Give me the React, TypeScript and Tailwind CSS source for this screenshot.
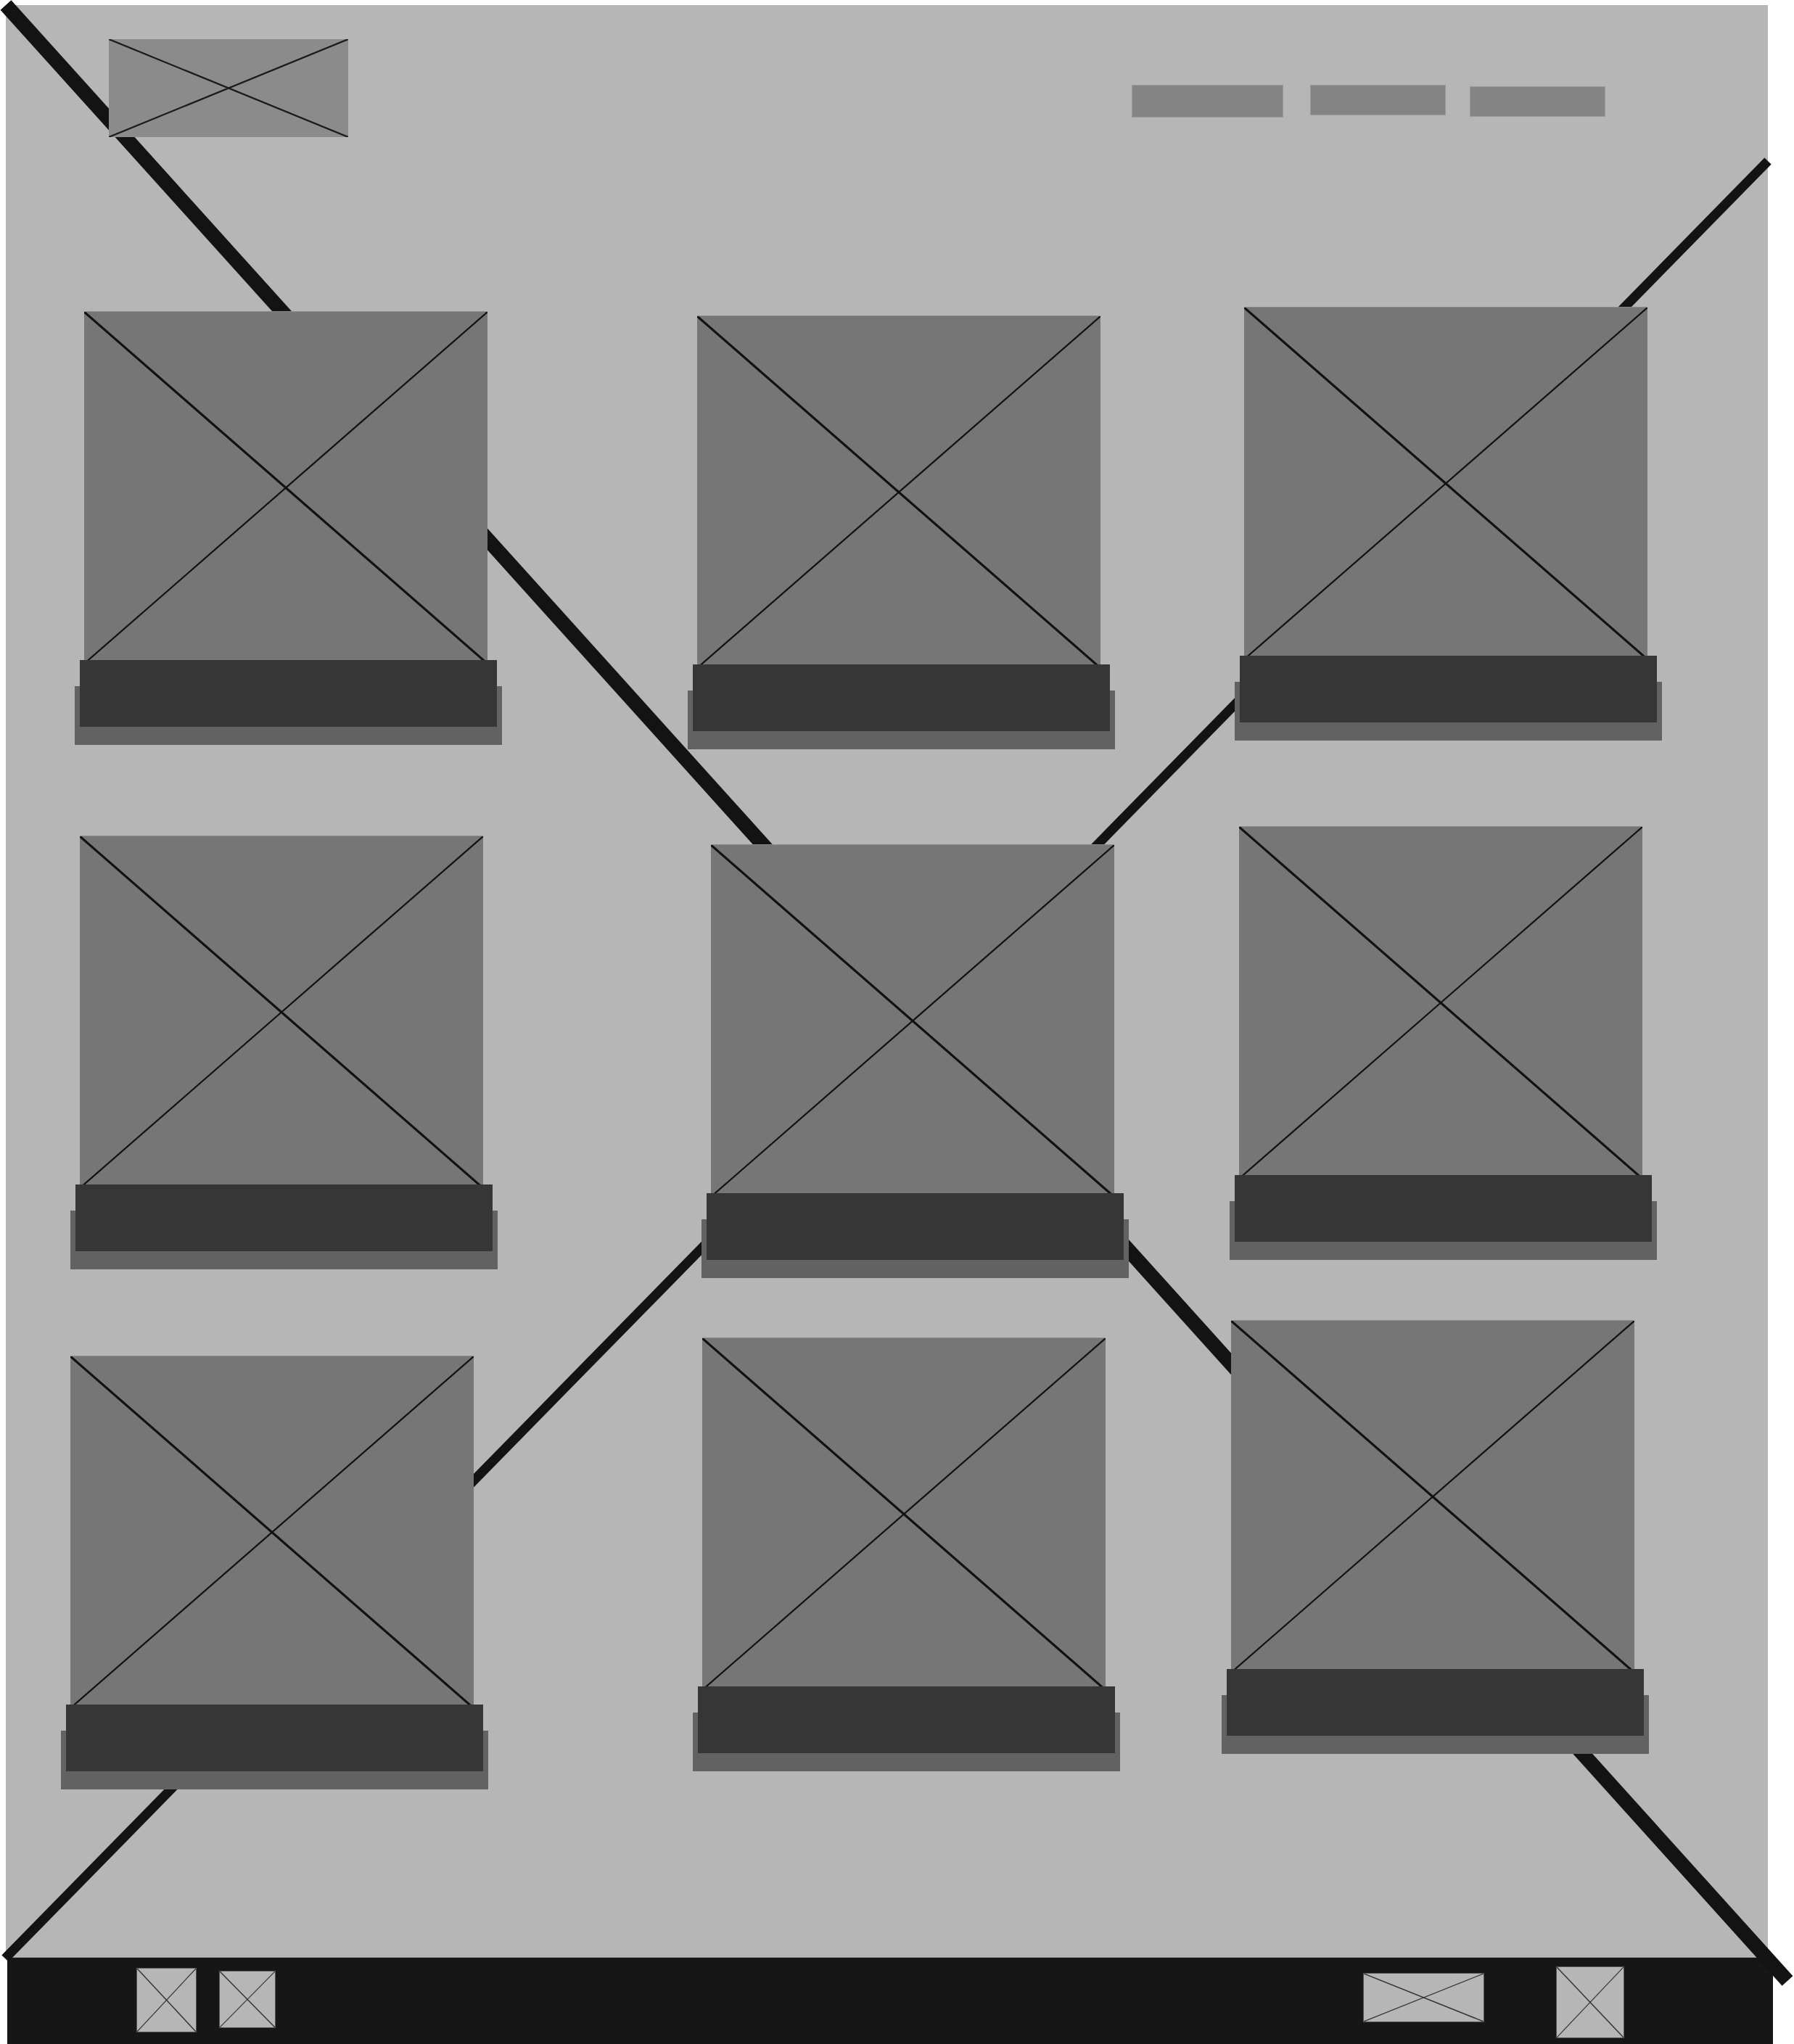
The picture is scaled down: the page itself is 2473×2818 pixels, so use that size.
import React from 'react';

type Card = { id: number; className: string };

const rows: { className: string; cards: Card[] }[] = [
  {
    className: 'mt-[234px]',
    cards: [
      { id: 1, className: 'ml-[108px] mt-[6px]' },
      { id: 2, className: 'ml-[289px] mt-[12px]' },
      { id: 3, className: 'ml-[198px] mt-0' },
    ],
  },
  {
    className: 'mt-[131px]',
    cards: [
      { id: 4, className: 'ml-[102px] mt-[13px]' },
      { id: 5, className: 'ml-[314px] mt-[25px]' },
      { id: 6, className: 'ml-[172px] mt-0' },
    ],
  },
  {
    className: 'mt-[83px]',
    cards: [
      { id: 7, className: 'ml-[89px] mt-[49px]' },
      { id: 8, className: 'ml-[315px] mt-[24px]' },
      { id: 9, className: 'ml-[173px] mt-0' },
    ],
  },
];

const Cross = ({ thick = 3.2, thin = 2.2, color = '#111111' }: { thick?: number; thin?: number; color?: string }) => (
  <svg className="absolute inset-0 h-full w-full" viewBox="0 0 100 100" preserveAspectRatio="none">
    <line x1="0" y1="0" x2="100" y2="100" stroke={color} strokeWidth={thick} vectorEffect="non-scaling-stroke" />
    <line x1="100" y1="0" x2="0" y2="100" stroke={color} strokeWidth={thin} vectorEffect="non-scaling-stroke" />
  </svg>
);

const ProductCard = ({ className }: { className: string }) => (
  <div className={`relative flex w-[556px] flex-col ${className}`}>
    <div className="relative h-[486px] w-[556px] border-t border-[#8a8a8a] bg-[#767676]">
      <Cross />
    </div>
    <div className="relative -mt-[5px] -ml-[6px] h-[92px] w-[575px]">
      <div className="absolute top-[36px] -left-[7px] h-[81px] w-[589px] bg-[#626262]" />
      <div className="relative h-[92px] w-[575px] bg-[#363636]" />
    </div>
  </div>
);

const FooterIcon = ({ className }: { className: string }) => (
  <div className={`relative border border-[#555555] bg-[#b6b6b6] ${className}`}>
    <Cross thick={1.5} thin={1.2} color="#333333" />
  </div>
);

const App = () => {
  return (
    <div className="relative h-[2818px] w-[2473px] overflow-hidden bg-white">
      <main className="relative ml-[8px] mt-[7px] flex h-[2692px] w-[2429px] flex-col border-b border-[#a5a5a5] bg-[#b6b6b6]">
        <svg
          className="pointer-events-none absolute -left-[8px] -top-[7px] h-[2818px] w-[2473px] overflow-visible"
          viewBox="0 0 2473 2818"
        >
          <line x1="8" y1="7" x2="2464" y2="2731" stroke="#131313" strokeWidth="20" />
          <line x1="2437" y1="222" x2="7" y2="2700" stroke="#131313" strokeWidth="13" />
        </svg>

        <header className="flex items-start pt-[47px]">
          <div className="relative ml-[142px] h-[135px] w-[330px] bg-[#8b8b8b]">
            <Cross thick={2.2} thin={2.2} color="#1a1a1a" />
          </div>
          <nav className="ml-auto mr-[224px] mt-[63px] flex items-start">
            <div className="h-[45px] w-[209px] border border-[#999999] bg-[#848484]" />
            <div className="ml-[37px] h-[42px] w-[187px] border border-[#999999] bg-[#848484]" />
            <div className="ml-[33px] mt-[2px] h-[42px] w-[187px] border border-[#999999] bg-[#848484]" />
          </nav>
        </header>

        {rows.map((row, i) => (
          <section key={i} className={`flex items-start ${row.className}`}>
            {row.cards.map((card) => (
              <ProductCard key={card.id} className={card.className} />
            ))}
          </section>
        ))}
      </main>

      <footer className="ml-[10px] flex h-[119px] w-[2434px] items-start bg-[#161616]">
        <FooterIcon className="ml-[178px] mt-[14px] h-[89px] w-[83px]" />
        <FooterIcon className="ml-[31px] mt-[18px] h-[79px] w-[78px]" />
        <FooterIcon className="ml-[1499px] mt-[21px] h-[68px] w-[167px]" />
        <FooterIcon className="ml-[99px] mt-[12px] h-[99px] w-[94px]" />
      </footer>
    </div>
  );
};

export default App;
